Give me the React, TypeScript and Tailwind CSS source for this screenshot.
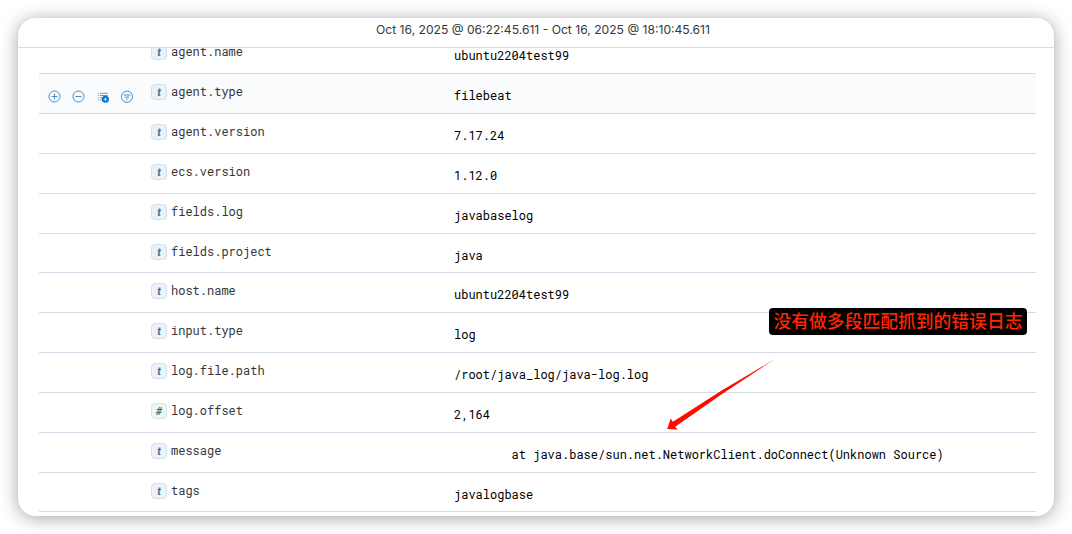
type Field = {
  name: string;
  value: string;
  type?: 'text' | 'number';
  active?: boolean;
  short?: boolean;
};

const fields: Field[] = [
  { name: 'agent.name', value: 'ubuntu2204test99' },
  { name: 'agent.type', value: 'filebeat', active: true },
  { name: 'agent.version', value: '7.17.24' },
  { name: 'ecs.version', value: '1.12.0' },
  { name: 'fields.log', value: 'javabaselog' },
  { name: 'fields.project', value: 'java', short: true },
  { name: 'host.name', value: 'ubuntu2204test99' },
  { name: 'input.type', value: 'log' },
  { name: 'log.file.path', value: '/root/java_log/java-log.log' },
  { name: 'log.offset', value: '2,164', type: 'number' },
  { name: 'message', value: '\tat java.base/sun.net.NetworkClient.doConnect(Unknown Source)' },
  { name: 'tags', value: 'javalogbase', short: true },
];

function FieldToken({ type = 'text' }: { type?: 'text' | 'number' }) {
  const colors =
    type === 'number'
      ? 'border-[#cdebe1] bg-[#ebf7f3] text-[#387765]'
      : 'border-[#cfdfed] bg-[#ebf2f8] text-[#3f6e96]';
  return (
    <span
      className={`flex h-4 w-4 shrink-0 items-center justify-center rounded-[4px] border font-['Roboto'] text-[11px] leading-none font-bold italic ${colors}`}
    >
      {type === 'number' ? '#' : 't'}
    </span>
  );
}

function RowActions() {
  return (
    <div className="flex gap-[11px] pt-4 pl-[9px] text-[#2b83cc]">
      <svg width="13" height="13" viewBox="0 0 13 13" fill="none" stroke="currentColor" strokeWidth="0.9">
        <circle cx="6.5" cy="6.5" r="5.5" />
        <path d="M3.5 6.5h6M6.5 3.5v6" />
      </svg>
      <svg width="13" height="13" viewBox="0 0 13 13" fill="none" stroke="currentColor" strokeWidth="0.9">
        <circle cx="6.5" cy="6.5" r="5.5" />
        <path d="M3.5 6.5h6" />
      </svg>
      <svg width="13" height="13" viewBox="0 0 13 13" fill="none" stroke="currentColor" strokeWidth="0.8">
        <path d="M1.8 3.3h1M1.8 5.5h1M1.8 7.7h1M1.8 9.9h1M4 3.3h7.8M4 5.5h7.8M4 7.7h2.5M4 9.9h1.5" />
        <circle cx="9.4" cy="9.3" r="3.5" fill="#0b6fc2" stroke="none" />
        <path d="M7.6 9.3h3.6M9.4 7.5v3.6" stroke="white" />
      </svg>
      <svg width="13" height="13" viewBox="0 0 13 13" fill="none" stroke="currentColor" strokeWidth="0.9">
        <circle cx="7" cy="6.7" r="5.6" />
        <path d="M3.5 5h7M4.8 7.1h4.4M6.1 9.1h1.8" />
      </svg>
    </div>
  );
}

function FieldRow({ field }: { field: Field }) {
  return (
    <div
      className={`flex shrink-0 border-b border-[#d3dae6] font-['Roboto_Mono','Liberation_Mono',monospace] text-[12px] leading-4 ${
        field.short ? 'h-[39px]' : 'h-10'
      } ${field.active ? 'bg-[#fafbfd]' : ''}`}
    >
      <div className="w-28 shrink-0">{field.active && <RowActions />}</div>
      <div className="flex w-[303px] shrink-0 items-start gap-1 pt-2.5 text-[#343741]">
        <FieldToken type={field.type} />
        <span className="-mt-px">{field.name}</span>
      </div>
      <pre className="pt-[13px] font-[inherit] text-black [tab-size:8]">{field.value}</pre>
    </div>
  );
}

export default function App() {
  return (
    <div className="relative h-[534px] w-[1072px] overflow-hidden bg-white p-[18px]">
      <div className="flex h-[498px] w-[1036px] flex-col overflow-hidden rounded-[18px] bg-white shadow-[0_2px_18px_rgba(0,0,0,0.36)]">
        <div className="flex h-[30px] shrink-0 justify-center border-b border-[#d3dae6] pt-1 pl-[14px] font-['Inter',sans-serif] text-[12.14px] leading-4 text-[#343741]">
          Oct 16, 2025 @ 06:22:45.611 - Oct 16, 2025 @ 18:10:45.611
        </div>
        <div className="mr-[18px] ml-[21px] flex flex-1 flex-col justify-start overflow-hidden">
          {/* scrolled list, the first row sits partly under the header */}
          <div className="-mt-3.5 flex flex-col">
            {fields.map((field) => (
              <FieldRow key={field.name} field={field} />
            ))}
          </div>
        </div>
      </div>

      <div className="absolute top-[308px] left-[769px] flex h-[27px] w-[258px] items-center justify-center rounded-[4px] bg-black pb-0.5 font-['Noto_Sans_CJK_SC',sans-serif] text-[17.8px] leading-none font-medium whitespace-nowrap text-[#ff2600]">
        没有做多段匹配抓到的错误日志
      </div>
      <svg className="absolute top-[355px] left-[660px]" width="120" height="80" viewBox="0 0 120 80" fill="#ff0c00">
        <path d="M115 4 61.7 35.6 12.9 66.8 10.7 63.5 7.2 74l10.5.6-2.5-2.8 46.5-32.5Z" />
      </svg>
    </div>
  );
}
